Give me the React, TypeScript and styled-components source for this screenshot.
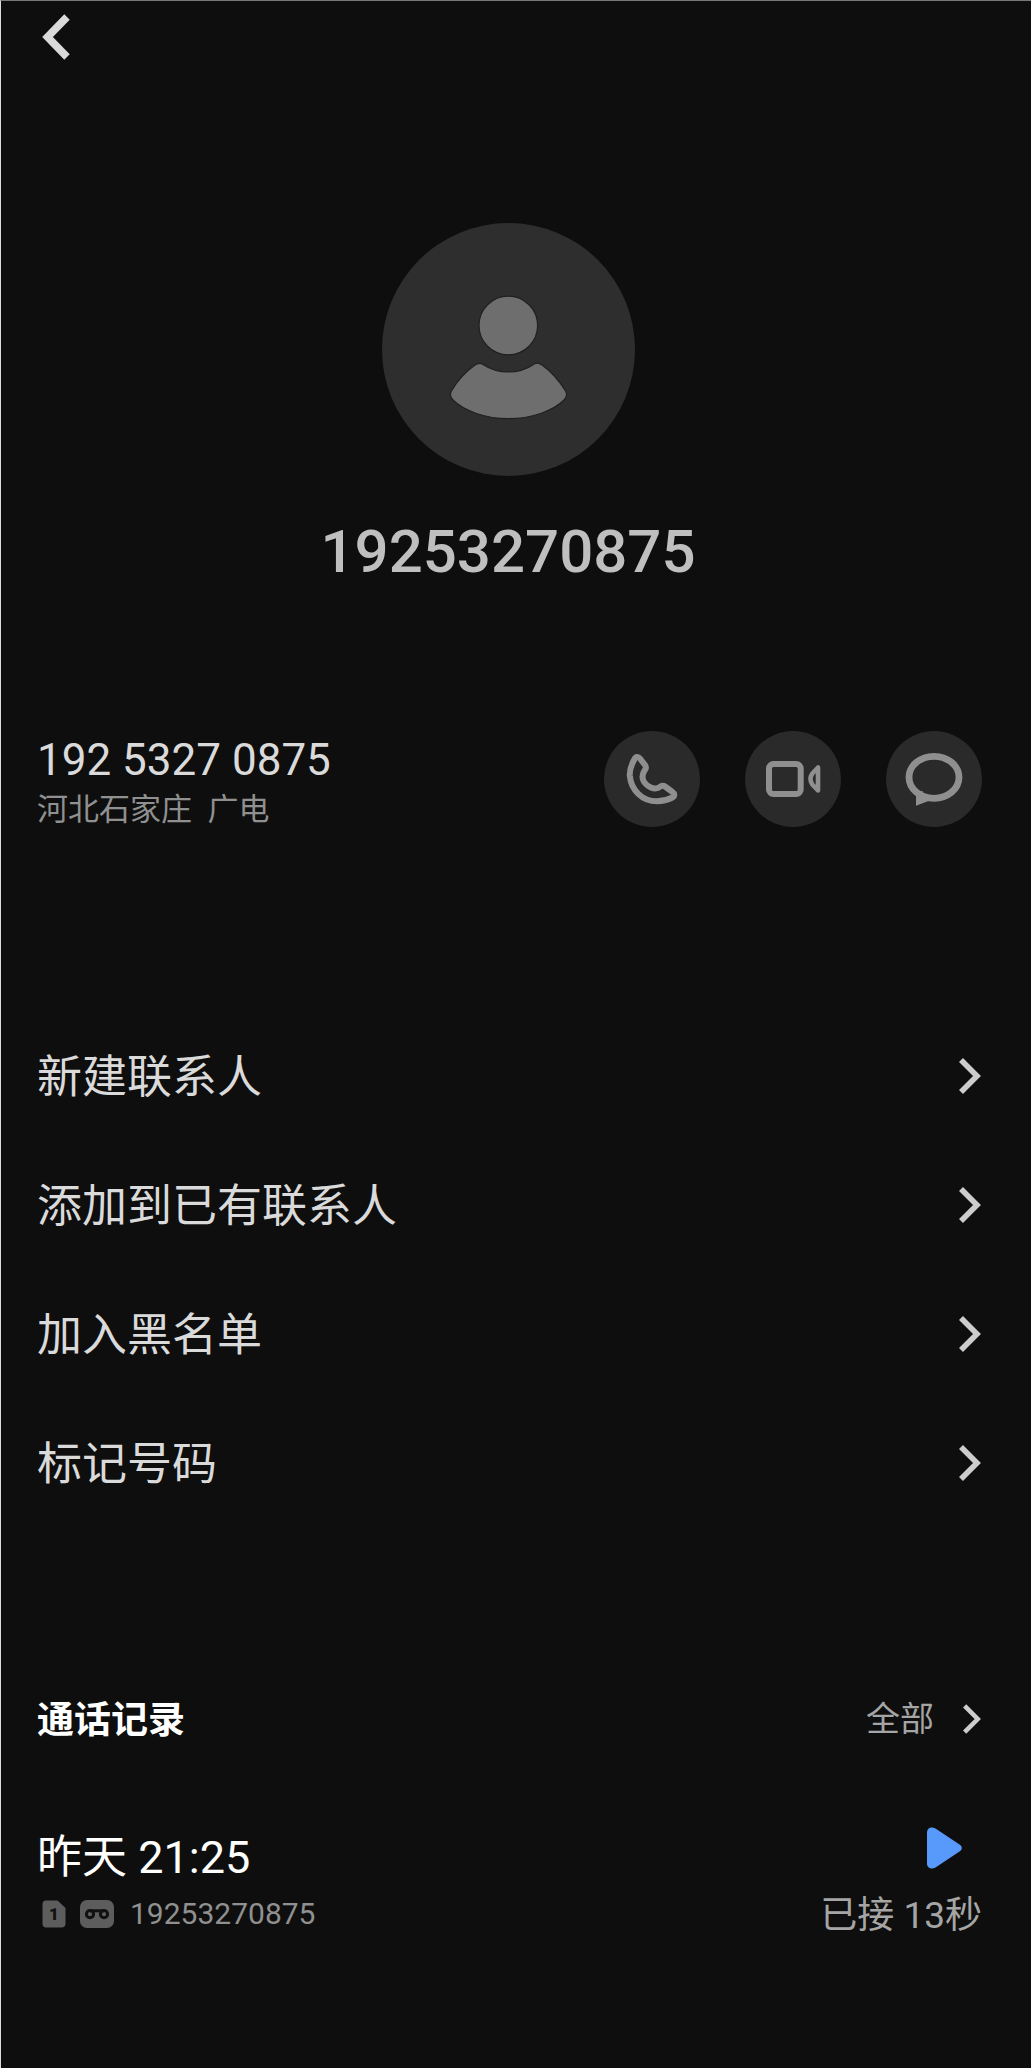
import React from 'react';
import styled, { createGlobalStyle } from 'styled-components';

const colors = {
  page: '#0e0e0e',
  disc: '#2a2a2a',
  text: '#dadada',
  bright: '#ffffff',
  muted: '#909090',
  soft: '#a5a5a5',
  icon: '#8f8f8f',
  badge: '#5d5d5d',
  accent: '#579afb',
};

const GlobalStyle = createGlobalStyle`
  *, *::before, *::after { box-sizing: border-box; }
  body {
    margin: 0;
    background: ${colors.page};
    color: ${colors.text};
    font-family: Roboto, "Noto Sans CJK SC", sans-serif;
  }
  h1, h2, p, ul { margin: 0; padding: 0; }
  svg { display: block; flex: none; }
`;

const Screen = styled.main`
  min-height: 100vh;
  padding: 0 49px 80px 36px;
  border-top: 1px solid #777777;
  border-left: 1px solid #dcdcdc;
  background: ${colors.page};
`;

const PlainButton = styled.button`
  display: flex;
  align-items: center;
  padding: 0;
  border: 0;
  background: none;
  color: inherit;
  font: inherit;
  cursor: pointer;
`;

const TopBar = styled.header`
  display: flex;
  align-items: center;
  height: 72px;
  padding-left: 5px;
`;

const Profile = styled.section`
  display: flex;
  flex-direction: column;
  align-items: center;
  gap: 40px;
  margin-top: 150px;
  padding-right: 3px;
`;

const Avatar = styled.div`
  width: 253px;
  height: 253px;
  border-radius: 50%;
  background: #2e2e2e;
`;

const ProfileName = styled.h1`
  color: #bfbfbf;
  font-size: 60px;
  font-weight: 500;
  line-height: 72px;
`;

const ContactRow = styled.section`
  display: flex;
  align-items: center;
  justify-content: space-between;
  height: 96px;
  margin-top: 143px;
`;

const ContactText = styled.div`
  padding-top: 10px;
`;

const PhoneNumber = styled.p`
  font-size: 44px;
  line-height: 52px;
`;

const Region = styled.p`
  color: ${colors.muted};
  font-size: 31px;
  line-height: 48px;
  white-space: pre;
`;

const Actions = styled.div`
  display: flex;
  gap: 45px;
`;

const RoundButton = styled(PlainButton)`
  width: 96px;
  height: 96px;
  border-radius: 50%;
  background: ${colors.disc};
`;

const Menu = styled.ul`
  margin-top: 184px;
  list-style: none;
`;

const MenuButton = styled(PlainButton)`
  justify-content: space-between;
  width: 100%;
  height: 129px;
  padding-right: 1px;
  font-size: 45px;
  line-height: 64px;
  text-align: left;
`;

const MenuLabel = styled.span`
  padding-top: 4px;
`;

const LogHeader = styled.header`
  display: flex;
  align-items: center;
  justify-content: space-between;
  height: 64px;
  margin-top: 160px;
`;

const LogTitle = styled.h2`
  padding-top: 4px;
  color: ${colors.bright};
  font-size: 37px;
  font-weight: 700;
  line-height: 56px;
`;

const AllButton = styled(PlainButton)`
  gap: 29px;
  padding-right: 1px;
  color: ${colors.soft};
  font-size: 34px;
  line-height: 48px;
`;

const LogEntry = styled.article`
  display: flex;
  flex-direction: column;
  margin-top: 76px;
`;

const EntryLine = styled.div`
  display: flex;
  align-items: center;
  justify-content: space-between;
  height: 58px;
`;

const EntryTime = styled.p`
  padding-top: 4px;
  color: ${colors.bright};
  font-size: 45px;
  line-height: 58px;
`;

const PlayButton = styled(PlainButton)`
  padding: 0 20px 16px 0;
`;

const EntrySource = styled.div`
  display: flex;
  align-items: center;
  padding-left: 5px;
`;

const SourceNumber = styled.span`
  padding-left: 16px;
  color: ${colors.muted};
  font-size: 30px;
  line-height: 48px;
`;

const Badges = styled.div`
  display: flex;
  align-items: center;
  gap: 14px;
`;

const EntryStatus = styled.p`
  padding-top: 4px;
  color: ${colors.soft};
  font-size: 37px;
  line-height: 48px;
`;

const Chevron = ({ height = 36 }: { height?: number }) => (
  <svg width={Math.round((height * 22) / 36)} height={height} viewBox="0 0 22 36" fill="none" aria-hidden="true">
    <path d="M2 2L18 18L2 34" stroke="#cdcdcd" strokeWidth="5.6" />
  </svg>
);

const BackIcon = () => (
  <svg width="28" height="46" viewBox="0 0 28 46" fill="none" aria-hidden="true">
    <path d="M25 3L5.5 23L25 43" stroke="#dadada" strokeWidth="7.6" />
  </svg>
);

const PersonIcon = () => (
  <svg width="253" height="253" viewBox="0 0 253 253" fill="#6e6e6e" stroke="#202020" strokeWidth="1.2" aria-hidden="true">
    <circle cx="126.3" cy="102.5" r="29.3" />
    <path d="M101 141.5C116 151.500 137 151.500 151.500 141.500C154 139.600 157 139.800 160 142C169 148.500 178 159 183.500 168C185.500 171.500 184.500 174.500 182 177C171 188 149 195.700 126.500 195.700C104 195.700 82 188 71 177C68.500 174.500 67.500 171.500 69.500 168C74.500 159 84 148.500 93 142C96 139.800 98.500 139.800 101 141.500Z" />
  </svg>
);

const PhoneIcon = () => (
  <svg width="96" height="96" viewBox="0 0 96 96" fill="none" stroke={colors.icon} strokeWidth="6" strokeLinejoin="round" aria-hidden="true">
    <path d="M36 27.500C34 25 31.500 25.500 30.300 28.500C27 34.500 25.500 39.500 25.800 44.500C27 59 38 70.200 53 70.300C59 70.300 64 68.800 68.500 66.500C71 65 70.800 62.500 68.500 61L61 55.500C59.500 54.400 58 54.500 56.500 55.500C54 57.500 50.500 58 47 56.500C39.500 53 36.500 47 40 40.500L41.500 38C42.300 36.500 42 35.500 41 34Z" />
  </svg>
);

const VideoIcon = () => (
  <svg width="96" height="96" viewBox="0 0 96 96" fill="none" stroke={colors.icon} strokeLinejoin="round" aria-hidden="true">
    <rect x="24" y="33" width="31.700" height="30" rx="4.500" strokeWidth="6" />
    <path d="M73 36.500V59.500L67.300 53.500Q63.700 48 67.300 42.500Z" strokeWidth="4.600" />
  </svg>
);

const MessageIcon = () => (
  <svg width="96" height="96" viewBox="0 0 96 96" aria-hidden="true">
    <ellipse cx="48" cy="46.300" rx="25" ry="21" fill="none" stroke={colors.icon} strokeWidth="6.800" />
    <path d="M30 61L36.700 60V64.500L43 64.500L42.500 70L30 74.700Z" fill={colors.icon} />
  </svg>
);

const SimIcon = () => (
  <svg width="24" height="28" viewBox="0 0 24 28" role="img" aria-label="SIM 1">
    <path d="M4 .500H15.500L23.500 8V23.500Q23.500 27.500 19.500 27.500H4Q.500 27.500 .500 23.500V4.500Q.500 .500 4 .500Z" fill={colors.badge} />
    <text x="12" y="20" textAnchor="middle" fontFamily="Roboto, sans-serif" fontSize="17" fontWeight="900" fill="#111111">1</text>
  </svg>
);

const TapeIcon = () => (
  <svg width="34" height="28" viewBox="0 0 34 28" fill="none" aria-hidden="true">
    <rect width="34" height="28" rx="7" fill={colors.badge} />
    <g stroke="#111111" strokeWidth="3">
      <circle cx="10" cy="14.200" r="3.600" />
      <circle cx="24" cy="14.200" r="3.600" />
      <path d="M10 10.800H24" />
    </g>
  </svg>
);

const PlayIcon = () => (
  <svg width="35" height="42" viewBox="0 0 35 42" fill={colors.accent} aria-hidden="true">
    <path d="M0 5.500C0 1 4.500 -1 8.500 1.500L32.500 17.500C35.600 19.600 35.600 22.400 32.500 24.500L8.500 40.500C4.500 43 0 41 0 36.500Z" />
  </svg>
);

const contactActions = [
  { label: '拨打电话', Icon: PhoneIcon },
  { label: '视频通话', Icon: VideoIcon },
  { label: '发送信息', Icon: MessageIcon },
];

const menuItems = ['新建联系人', '添加到已有联系人', '加入黑名单', '标记号码'];

export default function App() {
  return (
    <>
      <GlobalStyle />
      <Screen>
        <TopBar>
          <PlainButton type="button" aria-label="返回">
            <BackIcon />
          </PlainButton>
        </TopBar>

        <Profile>
          <Avatar>
            <PersonIcon />
          </Avatar>
          <ProfileName>19253270875</ProfileName>
        </Profile>

        <ContactRow>
          <ContactText>
            <PhoneNumber>192 5327 0875</PhoneNumber>
            <Region>{'河北石家庄  广电'}</Region>
          </ContactText>
          <Actions>
            {contactActions.map(({ label, Icon }) => (
              <RoundButton key={label} type="button" aria-label={label}>
                <Icon />
              </RoundButton>
            ))}
          </Actions>
        </ContactRow>

        <Menu>
          {menuItems.map((item) => (
            <li key={item}>
              <MenuButton type="button">
                <MenuLabel>{item}</MenuLabel>
                <Chevron />
              </MenuButton>
            </li>
          ))}
        </Menu>

        <section>
          <LogHeader>
            <LogTitle>通话记录</LogTitle>
            <AllButton type="button">
              全部
              <Chevron height={30} />
            </AllButton>
          </LogHeader>
          <LogEntry>
            <EntryLine>
              <EntryTime>昨天 21:25</EntryTime>
              <PlayButton type="button" aria-label="播放录音">
                <PlayIcon />
              </PlayButton>
            </EntryLine>
            <EntryLine>
              <EntrySource>
                <Badges>
                  <SimIcon />
                  <TapeIcon />
                </Badges>
                <SourceNumber>19253270875</SourceNumber>
              </EntrySource>
              <EntryStatus>已接 13秒</EntryStatus>
            </EntryLine>
          </LogEntry>
        </section>
      </Screen>
    </>
  );
}
